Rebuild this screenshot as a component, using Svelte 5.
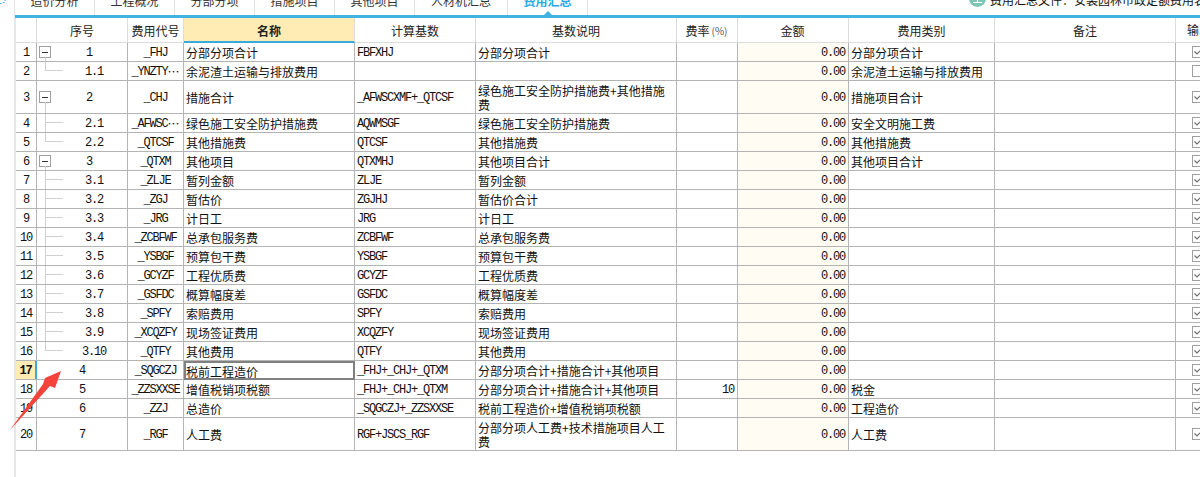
<script lang="ts">
	const tabs = ['造价分析', '工程概况', '分部分项', '措施项目', '其他项目', '人材机汇总', '费用汇总'];

	type Row = {
		h?: number;
		seq: string;
		code: string;
		more?: boolean;
		name: string;
		base: string;
		desc: string;
		rate?: string;
		type?: string;
		off?: boolean;
		fold?: boolean;
		child?: 'mid' | 'last';
	};

	const rows: Row[] = [
		{ seq: '1', code: '_FHJ', name: '分部分项合计', base: 'FBFXHJ', desc: '分部分项合计', type: '分部分项合计', fold: true },
		{ seq: '1.1', code: '_YNZTY', more: true, name: '余泥渣土运输与排放费用', base: '', desc: '', type: '余泥渣土运输与排放费用', off: true, child: 'last' },
		{ h: 33, seq: '2', code: '_CHJ', name: '措施合计', base: '_AFWSCXMF+_QTCSF', desc: '绿色施工安全防护措施费+其他措施费', type: '措施项目合计', fold: true },
		{ seq: '2.1', code: '_AFWSC', more: true, name: '绿色施工安全防护措施费', base: 'AQWMSGF', desc: '绿色施工安全防护措施费', type: '安全文明施工费', child: 'mid' },
		{ seq: '2.2', code: '_QTCSF', name: '其他措施费', base: 'QTCSF', desc: '其他措施费', type: '其他措施费', child: 'last' },
		{ seq: '3', code: '_QTXM', name: '其他项目', base: 'QTXMHJ', desc: '其他项目合计', type: '其他项目合计', fold: true },
		{ seq: '3.1', code: '_ZLJE', name: '暂列金额', base: 'ZLJE', desc: '暂列金额', child: 'mid' },
		{ seq: '3.2', code: '_ZGJ', name: '暂估价', base: 'ZGJHJ', desc: '暂估价合计', child: 'mid' },
		{ seq: '3.3', code: '_JRG', name: '计日工', base: 'JRG', desc: '计日工', child: 'mid' },
		{ seq: '3.4', code: '_ZCBFWF', name: '总承包服务费', base: 'ZCBFWF', desc: '总承包服务费', child: 'mid' },
		{ seq: '3.5', code: '_YSBGF', name: '预算包干费', base: 'YSBGF', desc: '预算包干费', child: 'mid' },
		{ seq: '3.6', code: '_GCYZF', name: '工程优质费', base: 'GCYZF', desc: '工程优质费', child: 'mid' },
		{ seq: '3.7', code: '_GSFDC', name: '概算幅度差', base: 'GSFDC', desc: '概算幅度差', child: 'mid' },
		{ seq: '3.8', code: '_SPFY', name: '索赔费用', base: 'SPFY', desc: '索赔费用', child: 'mid' },
		{ seq: '3.9', code: '_XCQZFY', name: '现场签证费用', base: 'XCQZFY', desc: '现场签证费用', child: 'mid' },
		{ seq: '3.10', code: '_QTFY', name: '其他费用', base: 'QTFY', desc: '其他费用', child: 'last' },
		{ seq: '4', code: '_SQGCZJ', name: '税前工程造价', base: '_FHJ+_CHJ+_QTXM', desc: '分部分项合计+措施合计+其他项目' },
		{ seq: '5', code: '_ZZSXXSE', name: '增值税销项税额', base: '_FHJ+_CHJ+_QTXM', desc: '分部分项合计+措施合计+其他项目', rate: '10', type: '税金' },
		{ seq: '6', code: '_ZZJ', name: '总造价', base: '_SQGCZJ+_ZZSXXSE', desc: '税前工程造价+增值税销项税额', type: '工程造价' },
		{ h: 33, seq: '7', code: '_RGF', name: '人工费', base: 'RGF+JSCS_RGF', desc: '分部分项人工费+技术措施项目人工费', type: '人工费' }
	];

	const selected = 16;
</script>

<div class="page">
	<svg class="corner" width="8" height="5" viewBox="0 0 8 5">
		<path d="M0 3.5h1.5M3 2.5h1.5M4.5 0.5h1" stroke="#39aee0" fill="none" />
	</svg>

	<div class="top">
		<div class="tabs">
			<div class="tab-list">
				{#each tabs as tab, i}
					<div class="tab" class:wide={i === 5} class:active={i === 6}>{tab}</div>
				{/each}
			</div>
			<div class="file-note">
				<span class="note-icon"></span>
				<span>费用汇总文件：安装园林市政定额费用表</span>
			</div>
		</div>
	</div>

	<div class="sheet">
		<div class="row head">
			<div class="cell num"></div>
			<div class="cell seq">序号</div>
			<div class="cell code">费用代号</div>
			<div class="cell name sorted">名称</div>
			<div class="cell base">计算基数</div>
			<div class="cell desc">基数说明</div>
			<div class="cell rate">费率<small>(%)</small></div>
			<div class="cell amount">金额</div>
			<div class="cell type">费用类别</div>
			<div class="cell note">备注</div>
			<div class="cell out">输出</div>
		</div>

		{#each rows as row, i}
			<div class="row" style:height="{row.h ?? 19}px">
				<div class="cell num latin" class:current={i === selected}>{i + 1}</div>
				<div class="cell seq latin" class:tree-fold={row.fold} class:tree-child={row.child}>
					{#if row.fold}
						<span class="fold"></span>
					{/if}
					{#if row.child}
						<span class="branch {row.child}"></span>
					{/if}
					{row.seq}
				</div>
				<div class="cell code latin">{row.code}{#if row.more}<span class="more">⋯</span>{/if}</div>
				<div class="cell name" class:focus={i === selected}>{row.name}</div>
				<div class="cell base latin">{row.base}</div>
				<div class="cell desc">{row.desc}</div>
				<div class="cell rate latin">{row.rate ?? ''}</div>
				<div class="cell amount latin">0.00</div>
				<div class="cell type">{row.type ?? ''}</div>
				<div class="cell note"></div>
				<div class="cell out">
					<svg class="check" width="12" height="12" viewBox="0 0 12 12">
						<rect x="0.5" y="0.5" width="11" height="11" fill="#fff" stroke="#a0a0a0" />
						{#if !row.off}
							<path d="M2.5 5.5 5 8 10 3" fill="none" stroke="#707070" stroke-width="1.2" />
						{/if}
					</svg>
				</div>
			</div>
		{/each}
	</div>

	<svg class="arrow" width="52" height="61" viewBox="0 0 52 61">
		<path d="M0 60 L33 14 L35 8 L51 1 L45 18 L40 16 Z" fill="#f5433c" />
	</svg>
</div>

<style>
	:global(body) {
		margin: 0;
		background: #fff;
	}

	.page {
		position: relative;
		width: 1200px;
		height: 477px;
		overflow: hidden;
		font-family: 'Noto Sans CJK SC', sans-serif;
		font-size: 12px;
		color: #111;
	}

	.corner {
		position: absolute;
		left: 0;
		top: 0;
	}

	.top {
		margin-left: 14px;
		border-left: 1px solid #e6e6e6;
	}

	.tabs {
		display: flex;
		justify-content: space-between;
		height: 15px;
		border-bottom: 3px solid #3fb4e3;
		overflow: hidden;
	}

	.tab-list {
		display: flex;
	}

	.tab {
		position: relative;
		width: 80px;
		height: 15px;
		box-sizing: border-box;
		line-height: 2px;
		text-align: center;
		border-right: 1px solid #e2e2e2;
		color: #333;
	}

	.tab.wide {
		width: 93px;
	}

	.tab.active {
		color: #29a9e6;
		font-weight: 700;
	}

	.tab.active::after {
		content: '';
		position: absolute;
		left: 50%;
		bottom: 0;
		margin-left: -4px;
		border: 4px solid transparent;
		border-top: 0;
		border-bottom-color: #3fb4e3;
	}

	.file-note {
		display: flex;
		gap: 4px;
		width: 231px;
		line-height: 0;
		white-space: nowrap;
		overflow: hidden;
	}

	.note-icon {
		position: relative;
		flex: none;
		width: 17px;
		height: 17px;
		margin-top: -10px;
		border-radius: 50%;
		background: #7cc7b4;
	}

	.note-icon::after {
		content: '';
		position: absolute;
		left: 4px;
		top: 9px;
		width: 9px;
		height: 3px;
		border-bottom: 1px solid #fff;
		background: linear-gradient(#fff, #fff) center / 1px 100% no-repeat;
	}

	.sheet {
		margin-left: 14px;
		height: 459px;
		border-left: 2px solid #e6e6e6;
	}

	.row {
		display: flex;
		height: 19px;
		box-sizing: border-box;
		border-bottom: 1px solid #b4b4b4;
	}

	.row.head {
		height: 25px;
		border-bottom: 1px solid #dcdcdc;
	}

	.cell {
		position: relative;
		flex: none;
		display: flex;
		align-items: center;
		justify-content: center;
		box-sizing: border-box;
		padding: 2px 2px 0;
		border-right: 1px solid #b4b4b4;
		line-height: 14px;
		overflow: hidden;
	}

	.row.head .cell {
		justify-content: center;
		border-right-color: #dcdcdc;
		background: #fff;
		color: #222;
	}

	.latin {
		font-family: 'Liberation Mono', 'Noto Sans CJK SC', monospace;
		font-size: 12px;
		letter-spacing: -1.2px;
	}

	.more {
		font-family: 'Noto Sans CJK SC', sans-serif;
		letter-spacing: 0;
	}

	.num { width: 21px; padding-left: 0; padding-right: 0; }
	.seq { width: 91px; }
	.tree-fold { padding-left: 16px; }
	.tree-child { padding-left: 26px; }
	.code { width: 56px; padding-left: 0; padding-right: 0; white-space: nowrap; }
	.name { width: 171px; justify-content: flex-start; }
	.base { width: 121px; justify-content: flex-start; white-space: nowrap; }
	.desc { width: 201px; justify-content: flex-start; }
	.rate { width: 61px; justify-content: flex-end; padding-right: 3px; }
	.amount { width: 111px; justify-content: flex-end; background: #fffdf3; padding-right: 3px; }
	.type { width: 146px; justify-content: flex-start; }
	.note { width: 181px; }
	.out { width: 30px; justify-content: flex-start; padding: 0 0 0 16px; border-right: none; }

	.row.head .out { padding-left: 11px; justify-content: flex-start; white-space: nowrap; }
	.row.head small { font-size: 10px; margin-left: 2px; color: #555; }

	.row.head .name.sorted {
		background: #feecb4;
		border-bottom: 2px solid #3aa9dc;
		height: 25px;
		font-weight: 700;
	}

	.num.current {
		background: #feecb4;
		border-right: 2px solid #3aa9dc;
		font-weight: 700;
	}

	.name.focus {
		margin-bottom: -1px;
		outline: 2px solid #808080;
		outline-offset: -2px;
	}

	.fold {
		position: absolute;
		left: 2px;
		top: 50%;
		width: 12px;
		height: 12px;
		margin-top: -6px;
		box-sizing: border-box;
		border: 1px solid #a0a0a0;
		background: linear-gradient(#333, #333) center / 6px 1px no-repeat;
	}

	.fold::after {
		content: '';
		position: absolute;
		left: 5px;
		top: 10px;
		height: 20px;
		border-left: 1px solid #d0d0d0;
	}

	.branch {
		position: absolute;
		left: 8px;
		top: 0;
		width: 17px;
		height: 8px;
		border-left: 1px solid #d0d0d0;
		border-bottom: 1px solid #d0d0d0;
	}

	.branch.mid::after {
		content: '';
		position: absolute;
		left: -1px;
		top: 8px;
		height: 20px;
		border-left: 1px solid #d0d0d0;
	}

	.check {
		flex: none;
	}

	.arrow {
		position: absolute;
		left: 10px;
		top: 370px;
		pointer-events: none;
	}
</style>
